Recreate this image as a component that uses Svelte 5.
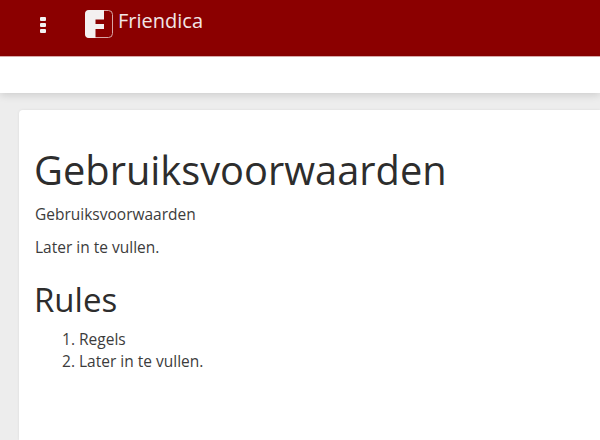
<script>
  let rules = ["Regels", "Later in te vullen."]
</script>

<div class="shell">
  <header class="topbar">
    <div class="menu-dots"><span></span><span></span><span></span></div>
    <div class="brand">
      <svg class="logo" viewBox="0 0 28 28" width="28" height="28">
        <rect x="0.5" y="0.5" width="27" height="27" rx="4" fill="none" stroke="#d9a5a5" stroke-width="1"/>
        <path d="M4 0 H19 V9.5 H10.5 V14 H19 V19 H10.5 V28 H4 A4 4 0 0 1 0 24 V4 A4 4 0 0 1 4 0 Z" fill="#f4f0f0"/>
      </svg>
      <span class="brand-name">Friendica</span>
    </div>
  </header>
  <div class="subbar"></div>

  <main class="page">
    <section class="card">
      <h1>Gebruiksvoorwaarden</h1>
      <p>Gebruiksvoorwaarden</p>
      <p>Later in te vullen.</p>
      <h2>Rules</h2>
      <ol>
        {#each rules as rule}
          <li>{rule}</li>
        {/each}
      </ol>
    </section>
  </main>
</div>

<style>
  :global(body) {
    margin: 0;
    background: #ededed;
    font-family: "Open Sans", "Noto Sans", sans-serif;
    color: #3c3c3c;
    overflow: hidden;
  }
  .shell {
    height: 100vh;
    display: flex;
    flex-direction: column;
  }
  .topbar {
    flex: 0 0 56px;
    background: #8b0000;
    display: flex;
    align-items: flex-start;
    box-sizing: border-box;
    padding-left: 40px;
  }
  .menu-dots {
    display: flex;
    flex-direction: column;
    gap: 2px;
    margin-top: 17px;
  }
  .menu-dots span {
    width: 6px;
    height: 4px;
    border-radius: 1px;
    background: #f2f2f2;
  }
  .brand {
    display: flex;
    align-items: flex-start;
    margin-left: 39px;
    margin-top: 10px;
  }
  .logo {
    display: block;
  }
  .brand-name {
    color: #f2e6e6;
    font-size: 20px;
    line-height: 24px;
    margin-left: 5px;
    margin-top: -1px;
  }
  .subbar {
    flex: 0 0 37px;
    background: #fff;
    box-shadow: 0 2px 8px rgba(0, 0, 0, 0.14);
    border-top: 1px solid #d9a9a9;
    box-sizing: border-box;
  }
  .page {
    flex: 1;
    display: flex;
    min-height: 0;
    padding: 17px 0 0 19px;
  }
  .card {
    flex: 1;
    background: #fff;
    border-radius: 4px 0 0 0;
    padding: 35px 0 0 16px;
    box-shadow: 0 0 3px rgba(0, 0, 0, 0.08);
  }
  h1 {
    font-size: 39.8px;
    font-weight: 400;
    line-height: 50px;
    margin: 0 0 8px -1px;
    color: #2d2d2d;
  }
  h2 {
    font-size: 33px;
    font-weight: 400;
    line-height: 40px;
    margin: 22px 0 8px -1px;
    color: #2d2d2d;
  }
  p {
    font-size: 15.5px;
    line-height: 22px;
    margin: 0 0 11px;
  }
  ol {
    margin: 0;
    padding-left: 44px;
    font-size: 15.5px;
    line-height: 22px;
  }
</style>
